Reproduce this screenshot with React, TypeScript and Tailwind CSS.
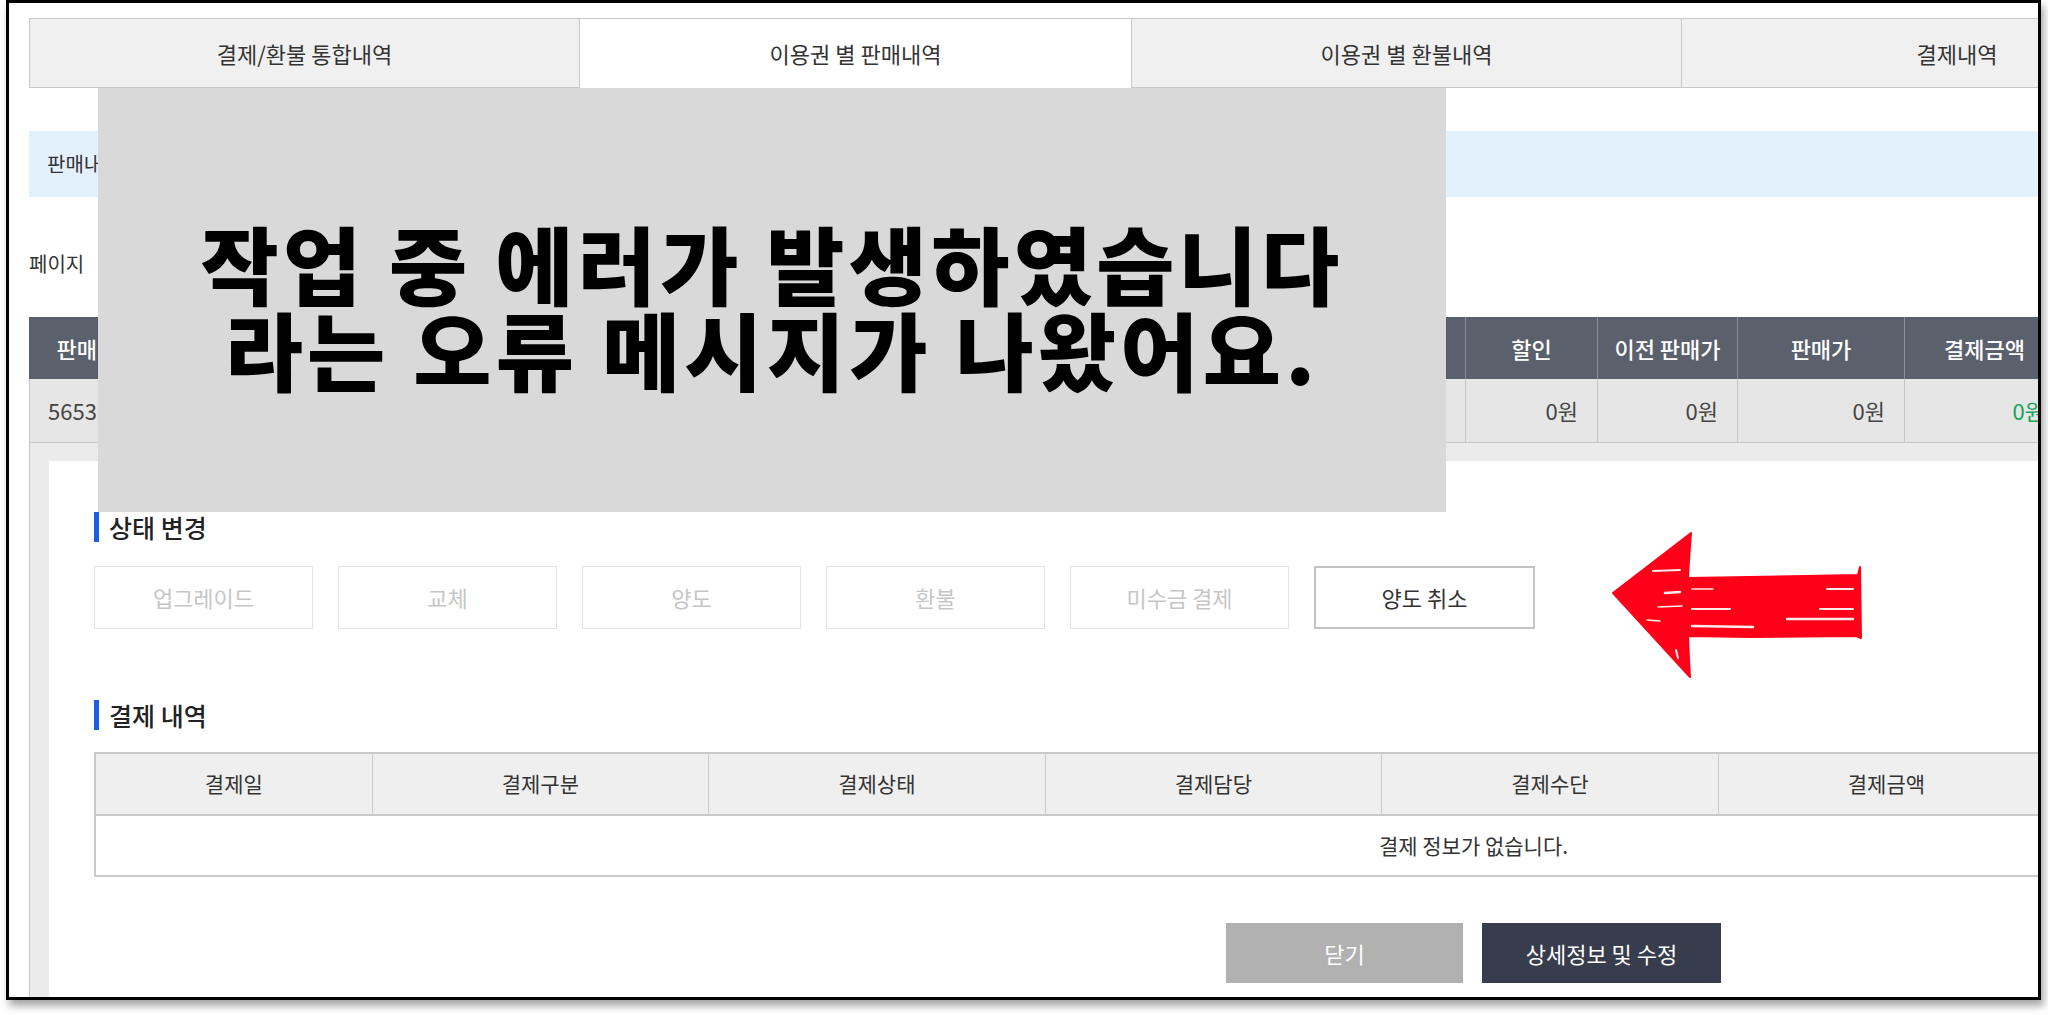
import type { ReactNode } from "react";

type Col = {
  label: string;
  w: number;
  value: string;
  align?: "left" | "center" | "right";
  green?: boolean;
};

// the middle columns sit under the grey annotation box, so they stay empty
const SALE_COLS: Col[] = [
  { label: "판매번호", w: 136, value: "56531024", align: "left" },
  { label: "", w: 150, value: "" },
  { label: "", w: 350, value: "" },
  { label: "", w: 220, value: "" },
  { label: "", w: 300, value: "" },
  { label: "", w: 280, value: "" },
  { label: "할인", w: 132, value: "0원", align: "right" },
  { label: "이전 판매가", w: 140, value: "0원", align: "right" },
  { label: "판매가", w: 167, value: "0원", align: "right" },
  { label: "결제금액", w: 160, value: "0원", align: "right", green: true },
  { label: "미수금", w: 170, value: "0원", align: "right" },
  { label: "판매담당", w: 170, value: "관리자" },
  { label: "상태", w: 513, value: "양도" },
];

const STATUS_BUTTONS = ["업그레이드", "교체", "양도", "환불", "미수금 결제"];

const PAY_COLS = [
  { label: "결제일", w: 276 },
  { label: "결제구분", w: 337 },
  { label: "결제상태", w: 337 },
  { label: "결제담당", w: 337 },
  { label: "결제수단", w: 337 },
  { label: "결제금액", w: 337 },
  { label: "승인번호", w: 399 },
  { label: "비고", w: 399 },
];

function SectionTitle({ children }: { children: ReactNode }) {
  return (
    <div className="flex h-[30px] items-center gap-[10px]">
      <span className="h-[30px] w-[5px] bg-[#1b5fe3]" />
      <span className="text-[25px] font-medium leading-none text-[#222]">{children}</span>
    </div>
  );
}

function RedArrow() {
  return (
    <svg
      className="absolute left-[1600px] top-[520px]"
      width="270"
      height="170"
      viewBox="0 0 270 170"
    >
      <path
        d="M13 73 L91 13 L89 40 L88 58 L150 57 L258 55 L260 47 L261 118 L256 116 L150 117 L88 116 L89 140 L90 157 Z"
        fill="#ff0019"
        stroke="#ff0019"
        strokeWidth="2"
        strokeLinejoin="round"
      />
      <g stroke="#ffffff" strokeLinecap="round" opacity="0.92">
        <path d="M53 51 L80 50" strokeWidth="2" />
        <path d="M65 73 L80 72" strokeWidth="2.5" />
        <path d="M58 87 L82 86" strokeWidth="1.5" />
        <path d="M47 100 L60 101" strokeWidth="1.5" />
        <path d="M76 130 L78 138" strokeWidth="2" />
        <path d="M92 69 L113 69" strokeWidth="1.5" />
        <path d="M227 69 L253 69" strokeWidth="2" />
        <path d="M92 89 L130 89" strokeWidth="2" />
        <path d="M220 89 L253 89" strokeWidth="2" />
        <path d="M187 99 L253 99" strokeWidth="2.5" />
        <path d="M92 106 L153 107" strokeWidth="2.5" />
      </g>
    </svg>
  );
}

export default function App() {
  return (
    <div className="relative h-[1015px] w-[2048px] overflow-hidden bg-white font-['Noto_Sans_CJK_KR',sans-serif]">
      <div className="ml-[6px] h-[1000px] w-[2035px] overflow-hidden border-[3px] border-black bg-white shadow-[3px_6px_8px_rgba(0,0,0,0.35)]">
        <div className="w-[2960px] pl-[20px] pt-[15px]">
          {/* tabs */}
          <div className="flex h-[70px] text-[22px] text-[#333]">
            <div className="flex w-[551px] items-center justify-center border border-[#c8c8c8] bg-[#f0f0f0]">
              결제/환불 통합내역
            </div>
            <div className="flex w-[551px] items-center justify-center border-t border-[#c8c8c8] bg-white">
              이용권 별 판매내역
            </div>
            <div className="flex w-[551px] items-center justify-center border border-[#c8c8c8] bg-[#f0f0f0]">
              이용권 별 환불내역
            </div>
            <div className="flex w-[551px] items-center justify-center border-y border-r border-[#c8c8c8] bg-[#f0f0f0]">
              결제내역
            </div>
          </div>

          <div className="mt-[43px] flex h-[66px] w-[2888px] items-center bg-[#e3f1fc] pl-[18px] text-[20px] text-[#333]">
            판매내역
          </div>

          <div className="mt-[55px] flex h-[24px] items-center text-[20px] text-[#333]">
            페이지
          </div>

          {/* sales table */}
          <div className="mt-[41px] w-[2888px]">
            <div className="flex h-[62px] bg-[#5b606d] text-[22px] font-medium text-white">
              {SALE_COLS.map((c, i) => (
                <div
                  key={i}
                  style={{ width: c.w }}
                  className={`flex items-center justify-center ${i > 0 ? "border-l border-[#8a8e98]" : ""}`}
                >
                  {c.label}
                </div>
              ))}
            </div>
            <div className="flex h-[64px] border-b border-l border-[#c6c6c6] bg-[#e6e6e6] text-[22px] text-[#444]">
              {SALE_COLS.map((c, i) => (
                <div
                  key={i}
                  style={{ width: i === 0 ? c.w - 1 : c.w }}
                  className={`flex items-center ${
                    c.align === "left"
                      ? "justify-start pl-[18px]"
                      : c.align === "right"
                        ? "justify-end pr-[19px]"
                        : "justify-center"
                  } ${i > 0 ? "border-l border-[#c6c6c6]" : ""} ${c.green ? "text-[#16a45a]" : ""}`}
                >
                  {c.value}
                </div>
              ))}
            </div>

            {/* expanded detail */}
            <div className="border-l border-[#c6c6c6] bg-[#ebebeb] pl-[19px] pt-[18px]">
              <div className="w-[2849px] bg-white pb-[40px] pl-[45px] pr-[45px] pt-[51px]">
                <SectionTitle>상태 변경</SectionTitle>
                <div className="mt-[24px] flex gap-[25px]">
                  {STATUS_BUTTONS.map((b) => (
                    <div
                      key={b}
                      className="flex h-[63px] w-[219px] items-center justify-center border border-[#e3e3e3] text-[22px] text-[#c6c6c6]"
                    >
                      {b}
                    </div>
                  ))}
                  <div className="flex h-[63px] w-[221px] items-center justify-center border-2 border-[#c4c4c4] text-[22px] text-[#333]">
                    양도 취소
                  </div>
                </div>

                <div className="mt-[71px]">
                  <SectionTitle>결제 내역</SectionTitle>
                </div>

                <div className="mt-[22px] w-[2759px] border-2 border-[#cacaca]">
                  <div className="flex h-[62px] border-b-2 border-[#cacaca] bg-[#efefef] text-[21px] text-[#333]">
                    {PAY_COLS.map((c, i) => (
                      <div
                        key={c.label}
                        style={{ width: c.w }}
                        className={`flex items-center justify-center ${i > 0 ? "border-l border-[#cacaca]" : ""}`}
                      >
                        {c.label}
                      </div>
                    ))}
                  </div>
                  <div className="flex h-[59px] items-center justify-center text-[21px] text-[#333]">
                    결제 정보가 없습니다.
                  </div>
                </div>

                <div className="mt-[46px] flex justify-center gap-[19px]">
                  <div className="flex h-[60px] w-[237px] items-center justify-center bg-[#b1b1b1] text-[22px] text-white">
                    닫기
                  </div>
                  <div className="flex h-[60px] w-[239px] items-center justify-center bg-[#373d4c] text-[22px] text-white">
                    상세정보 및 수정
                  </div>
                </div>
              </div>
            </div>
          </div>
        </div>
      </div>

      {/* annotation overlay */}
      <div className="absolute left-[98px] top-[88px] flex h-[424px] w-[1348px] flex-col items-center bg-[#d9d9d9] pt-[131px] text-[85px] font-black leading-[86px] tracking-[0.05em] text-black">
        <p>작업 중 에러가 발생하였습니다</p>
        <p>라는 오류 메시지가 나왔어요.</p>
      </div>

      <RedArrow />
    </div>
  );
}
